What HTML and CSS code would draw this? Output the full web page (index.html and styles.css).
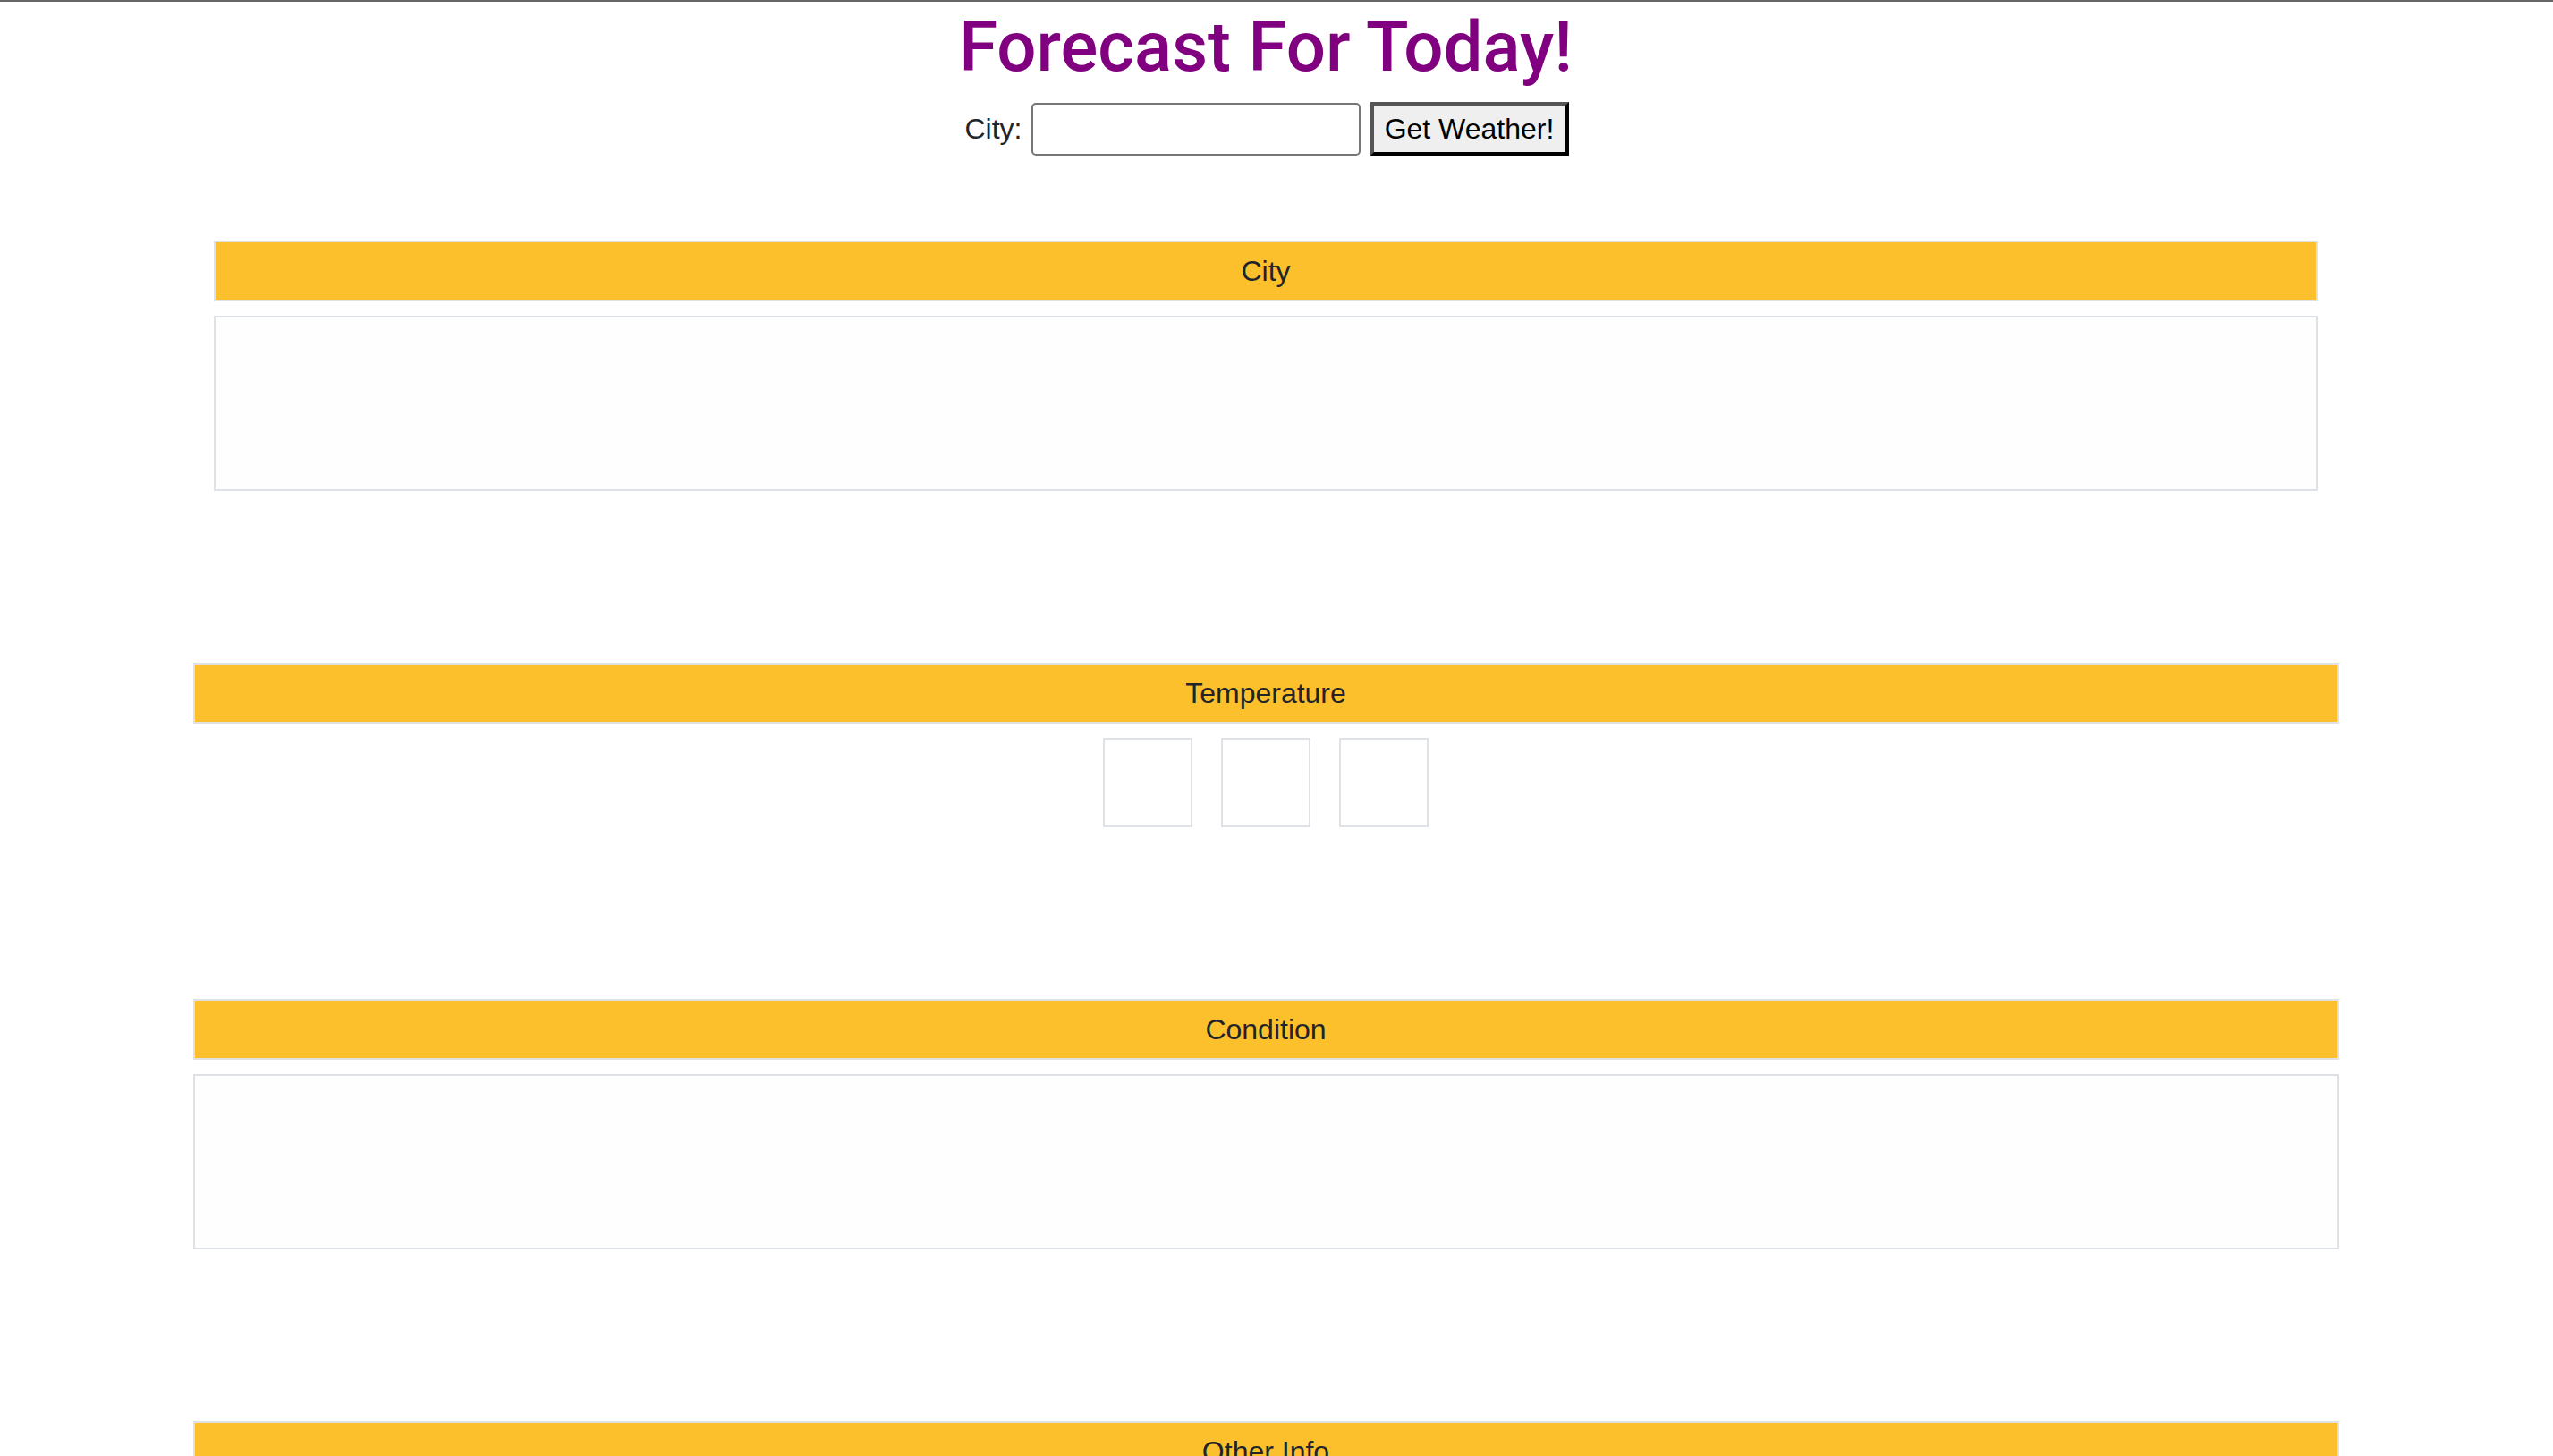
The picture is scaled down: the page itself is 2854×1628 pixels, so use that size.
FILE: index.html
```html
<!DOCTYPE html>
<html lang="en">
<head>
<meta charset="utf-8">
<title>Forecast For Today!</title>
<link rel="stylesheet" href="styles.css">
</head>
<body>
<div class="page">
  <h1 class="title">Forecast For Today!</h1>
  <form class="search">
    <label class="search-label" for="city">City:</label>
    <input class="search-input" id="city" type="text">
    <button class="search-btn" type="button">Get Weather!</button>
  </form>

  <section class="section section-narrow">
    <div class="section-head">City</div>
    <div class="section-body"></div>
  </section>

  <section class="section">
    <div class="section-head">Temperature</div>
    <div class="temp-row">
      <div class="temp-box"></div>
      <div class="temp-box"></div>
      <div class="temp-box"></div>
    </div>
  </section>

  <section class="section">
    <div class="section-head">Condition</div>
    <div class="section-body"></div>
  </section>

  <section class="section">
    <div class="section-head">Other Info</div>
    <div class="section-body"></div>
  </section>
</div>
</body>
</html>
```
FILE: styles.css
```css
html, body {
  margin: 0;
  padding: 0;
  background: #ffffff;
}
body {
  border-top: 2px solid #666666;
  font-family: "Liberation Sans", Arial, sans-serif;
  color: #212529;
  font-size: 32px;
}
.page {
  width: 2814px;
  margin-left: 8px;
}
.title {
  margin: 4px 0 0;
  text-align: center;
  font-family: Roboto, "Liberation Sans", sans-serif;
  font-weight: 500;
  font-size: 78px;
  line-height: 94px;
  color: #800080;
}
.search {
  display: flex;
  justify-content: center;
  align-items: center;
  margin-top: 14px;
  height: 60px;
}
.search-label {
  font-size: 32px;
  color: #212529;
  margin-right: 10px;
  padding-left: 2px;
}
.search-input {
  box-sizing: border-box;
  width: 368px;
  height: 59px;
  border: 2px solid #767676;
  border-radius: 5px;
  background: #fff;
  margin: 0 11px 0 0;
  padding: 0 6px;
  font-size: 32px;
}
.search-btn {
  box-sizing: border-box;
  width: 222px;
  height: 60px;
  margin: 0;
  padding: 0;
  background: #efefef;
  border-style: solid;
  border-width: 4px;
  border-color: #555555 #000000 #000000 #555555;
  font-family: "Liberation Sans", Arial, sans-serif;
  font-size: 32px;
  color: #000;
}
.section {
  width: 2399px;
  margin: 0 auto 192px;
}
.section-narrow {
  width: 2352px;
  margin-top: 95px;
}
.section-head {
  box-sizing: border-box;
  height: 68px;
  border: 2px solid #e0e1e3;
  background: #fdc02d;
  text-align: center;
  line-height: 64px;
  font-size: 32px;
  color: #212529;
}
.section-body {
  box-sizing: border-box;
  margin-top: 16px;
  height: 196px;
  border: 2px solid #dee2e6;
  background: #fefefe;
}
.temp-row {
  display: flex;
  justify-content: center;
  gap: 32px;
  margin-top: 16px;
}
.temp-box {
  box-sizing: border-box;
  width: 100px;
  height: 100px;
  border: 2px solid #dee2e6;
}
```
